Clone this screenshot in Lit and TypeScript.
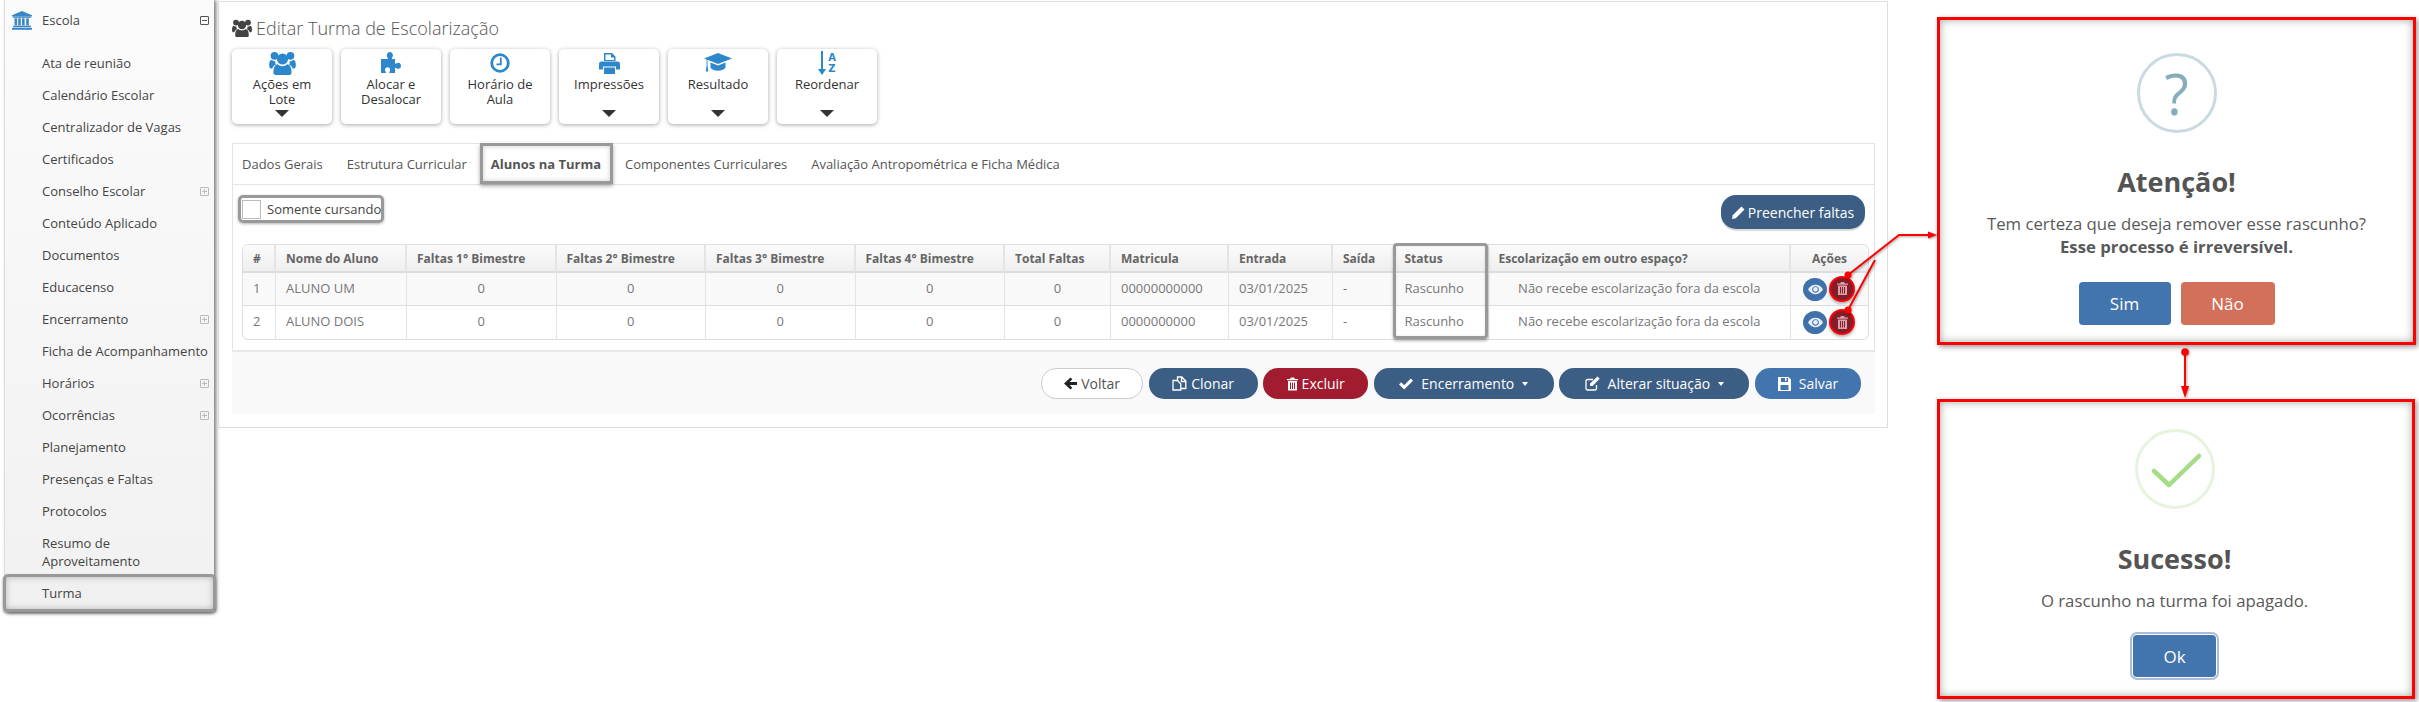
import { LitElement, html, css, svg } from "lit";
import { customElement } from "lit/decorators.js";

const ic = (w: number, h: number, vb: string, body: unknown, cls = "") =>
  html`<svg class="ic ${cls}" width=${w} height=${h} viewBox=${vb} fill="currentColor">${body}</svg>`;

const icons = {
  bank: (w = 20, h = 19) => ic(w, h, "0 0 20 19", svg`<path d="M10 0L20 4.2V5.5H0V4.2Z"/><rect x="1" y="5.5" width="18" height="1.3"/><rect x="2.5" y="7.3" width="2.6" height="7"/><rect x="6.2" y="7.3" width="2.6" height="7"/><rect x="10" y="7.3" width="2.6" height="7"/><rect x="14.2" y="7.3" width="2.6" height="7"/><rect x="1.2" y="14.6" width="17.6" height="1.6"/><rect x="0" y="16.8" width="20" height="2"/>`),
  users: (w: number, h: number) => ic(w, h, "0 0 20 18", svg`<circle cx="10" cy="6" r="4.2"/><circle cx="4" cy="3.6" r="2.9"/><circle cx="16" cy="3.6" r="2.9"/><path d="M4.8 18c-.9 0-1.6-.6-1.6-1.6 0-3.4.8-5.9 3.2-6.4 1 1 2.2 1.4 3.6 1.4s2.6-.4 3.6-1.4c2.4.5 3.2 3 3.2 6.4 0 1-.7 1.6-1.6 1.6z"/><path d="M0 10.5C0 8.300.6 6.800 2 6.800c.8.700 1.700 1 2.700.900-.3 1-.1 1.800.4 2.500-1.500.600-2.400 1.700-2.700 3H1.200C.4 13.200 0 12 0 10.500zM20 10.500c0-2.200-.6-3.700-2-3.700-.8.700-1.700 1-2.700.900.3 1 .1 1.800-.4 2.500 1.500.600 2.400 1.700 2.700 3h1.200c.8 0 1.200-1.200 1.200-2.700z"/>`),
  puzzle: () => ic(22, 24, "0 0 22 24", svg`<path d="M1 8h6.300c.6 0 .8-.5.5-1.100C7 5.700 6.800 5 6.800 4.200 6.800 2.300 8.200 1 9.900 1s3 1.300 3 3.200c0 .8-.3 1.500-.9 2.700-.3.6-.1 1.100.5 1.100H15v4.200c0 .6.500.8 1 .4.900-.7 1.600-.9 2.300-.9 1.700 0 2.700 1.400 2.700 3.100s-1 3-2.700 3c-.7 0-1.400-.3-2.300-.9-.5-.4-1-.2-1 .4V22H9.800c-.5 0-.7-.5-.4-1 .6-.9.800-1.500.800-2.200 0-1.500-1.100-2.500-2.600-2.500s-2.600 1-2.600 2.500c0 .7.200 1.300.8 2.200.3.500.1 1-.4 1H1z"/>`),
  clock: () => ic(20, 20, "0 0 20 20", svg`<circle cx="10" cy="10" r="8.300" fill="none" stroke="currentColor" stroke-width="2.800"/><path d="M10.800 4.500v6.800H6.500" fill="none" stroke="currentColor" stroke-width="1.800"/>`),
  print: () => ic(21, 21, "0 0 21 21", svg`<path d="M5 0h8l3.500 3.500V8H5zM6.500 1.500V7h8.500V4.500h-3v-3z" fill-rule="evenodd"/><path d="M2.500 8.500h16a2.500 2.500 0 0 1 2.500 2.500v5.500h-4v-3H4v3H0V11a2.500 2.500 0 0 1 2.500-2.500z"/><path d="M5 14.500h11V21H5z"/>`),
  cap: () => ic(28, 23, "0 0 28 23", svg`<path d="M14 1L28 6.500 14 12 3.500 7.800v5.700l.8 6H1.800l.8-6V7.400L0 6.500z"/><path d="M6.500 10.500L14 13.500l7.500-3v5.200c-1.500 2-4.500 3-7.500 3s-6-1-7.500-3z"/>`),
  eye: () => ic(15, 11, "0 0 16 11", svg`<path fill-rule="evenodd" d="M0 5.500C2 2 5 .5 8 .5s6 1.500 8 5c-2 3.500-5 5-8 5s-6-1.500-8-5zM8 2C6 2 4.400 3.500 4.400 5.500S6 9 8 9s3.600-1.500 3.600-3.500S10 2 8 2z"/><circle cx="8" cy="5.300" r="2.500"/>`),
  trash: (w = 11, h = 13) => ic(w, h, "0 0 11 13", svg`<path fill-rule="evenodd" d="M4 0h3l1 1.600h3v1.200H0V1.600h3zM1 3.600h9V13H1zM3 5v6.500h1V5zM5 5v6.500h1V5zM7 5v6.500h1V5z"/>`),
  pencil: () => ic(13, 13, "0 0 13 13", svg`<path d="M9.500.6l3 3-8.700 8.700L0 13l.7-3.800z"/>`),
  left: () => ic(13, 13, "0 0 13 13", svg`<path d="M6.500.5l1.800 1.800-2.600 2.700H13v3H5.700l2.600 2.700-1.800 1.800L0 6.500z"/>`),
  copy: () => ic(15, 15, "0 0 15 15", svg`<path fill="none" stroke="currentColor" stroke-width="1.300" d="M5.500 4.200V1h4.300L13.800 5v7.500H9M1 4.500h4.500L8.800 8v6H1zM9.500 1.500V5.500h4"/>`),
  check: () => ic(14, 12, "0 0 14 12", svg`<path d="M0 6.500L2.200 4.300 5.200 7.300 11.800.5 14 2.700 5.200 11.500z"/>`),
  edit: () => ic(15, 15, "0 0 15 15", svg`<path fill="none" stroke="currentColor" stroke-width="1.300" d="M11.500 9v3.500a1.500 1.500 0 0 1-1.500 1.500H2.500A1.500 1.500 0 0 1 1 12.500V5a1.500 1.500 0 0 1 1.500-1.500H8"/><path d="M12.500.5l2.200 2.200L7.600 10H5v-2.600z"/>`),
  save: () => ic(13, 14, "0 0 13 14", svg`<path fill-rule="evenodd" d="M0 0h10.500L13 2.500V14H0zM3 1v4h7V1H8.500v3H7V1zM2.500 8v5h8V8z"/>`),
};

const menu: [string, boolean][] = [
  ["Ata de reunião", false], ["Calendário Escolar", false], ["Centralizador de Vagas", false],
  ["Certificados", false], ["Conselho Escolar", true], ["Conteúdo Aplicado", false],
  ["Documentos", false], ["Educacenso", false], ["Encerramento", true],
  ["Ficha de Acompanhamento", false], ["Horários", true], ["Ocorrências", true],
  ["Planejamento", false], ["Presenças e Faltas", false], ["Protocolos", false],
  ["Resumo de Aproveitamento", false],
];

const tools = [
  { icon: icons.users(27, 24), label: "Ações em Lote", caret: true },
  { icon: icons.puzzle(), label: "Alocar e Desalocar", caret: false },
  { icon: icons.clock(), label: "Horário de Aula", caret: false },
  { icon: icons.print(), label: "Impressões", caret: true },
  { icon: icons.cap(), label: "Resultado", caret: true },
  { icon: html`<span class="az">${ic(8, 24, "0 0 8 24", svg`<path d="M3 0h2v18h3l-4 6-4-6h3z"/>`)}<span class="azt">A<br />Z</span></span>`, label: "Reordenar", caret: true },
];

const cols = [33, 131, 149.5, 149.5, 149.5, 149.5, 106, 118, 104, 61.5, 94, 302.5, 77];
const heads = ["#", "Nome do Aluno", "Faltas 1° Bimestre", "Faltas 2° Bimestre", "Faltas 3° Bimestre", "Faltas 4° Bimestre", "Total Faltas", "Matricula", "Entrada", "Saída", "Status", "Escolarização em outro espaço?", "Ações"];
const rows = [
  ["1", "ALUNO UM", "00000000000"],
  ["2", "ALUNO DOIS", "0000000000"],
];

@customElement("app-root")
export class AppRoot extends LitElement {
  static styles = css`
    :host { display: block; position: relative; width: 2419px; height: 702px; overflow: hidden; background: #fff; font-family: "Open Sans", sans-serif; color: #555; }
    .ic { display: block; flex: none; }
    .page { display: flex; align-items: flex-start; height: 702px; }

    .side { width: 209px; margin-left: 5px; height: 612px; background: linear-gradient(#fbfbfb, #f1f1f1); box-shadow: 2px 0 4px rgba(0,0,0,.55), -1px 0 1px rgba(0,0,0,.08); font-size: 13px; line-height: 18px; color: #444; flex: none; }
    .root { display: flex; align-items: center; height: 40px; }
    .root .bank { width: 37px; padding-left: 7px; box-sizing: border-box; color: #3a87c8; }
    .row { display: flex; align-items: center; justify-content: space-between; padding: 7px 5px 7px 37px; }
    .root .row-t { flex: 1; }
    .tog { width: 9px; height: 9px; margin-right: 5px; box-sizing: border-box; border: 1px solid #bbb; border-radius: 1px; position: relative; flex: none; color: #bbb; }
    .row .tog { margin-right: 0; }
    .tog::before { content: ""; position: absolute; left: 1px; right: 1px; top: 3px; height: 1px; background: currentColor; }
    .tog.plus::after { content: ""; position: absolute; top: 1px; bottom: 1px; left: 3px; width: 1px; background: currentColor; }
    .tog.minus { border-color: #555; color: #555; }
    .list { margin-top: 7px; }
    .turma { margin: -3px -2px 0 -2px; padding-left: 36px; border: 3px solid #999; border-radius: 5px; height: 38px; box-sizing: border-box; background: #f0f0f0; box-shadow: inset 0 0 6px rgba(0,0,0,.25), 0 2px 3px rgba(0,0,0,.4); }

    .main { width: 1670px; height: 427px; margin: 1px 0 0 4px; box-sizing: border-box; border: 1px solid #ddd; padding: 14px 12px 0 13px; flex: none; }
    h1 { margin: 0; font-size: 18px; font-weight: 300; line-height: 24px; color: #555; display: flex; align-items: center; gap: 4px; }
    h1 .ic { color: #444; }
    .tools { display: flex; gap: 9px; margin-top: 9px; }
    .tool { width: 100px; height: 75px; box-sizing: border-box; padding-top: 2px; background: #fff; border-radius: 5px; box-shadow: 0 1px 4px rgba(0,0,0,.35); display: flex; flex-direction: column; align-items: center; font-size: 13px; line-height: 15px; color: #333; text-align: center; }
    .tool .i { height: 24px; display: flex; align-items: center; color: #2d88cb; margin-bottom: 2px; }
    .tool .l { width: 82px; }
    .caret { margin-top: auto; margin-bottom: 7px; width: 0; height: 0; border-left: 7px solid transparent; border-right: 7px solid transparent; border-top: 7px solid #333; }
    .az { display: flex; gap: 2px; align-items: center; }
    .azt { font: bold 10px/11px "DejaVu Sans", sans-serif; color: #2d88cb; }

    .tabs { margin-top: 19px; border: 1px solid #e4e4e4; border-bottom: 2px solid #e8e8e8; height: 209px; box-sizing: border-box; width: 1643px; position: relative; }
    .tabbar { display: flex; height: 40px; border-bottom: 1px solid #e4e4e4; font-size: 13px; color: #555; align-items: center; padding-left: 9px; gap: 24px; }
    .tab.on { font-weight: 700; position: relative; }
    .tab.on::after { content: ""; position: absolute; left: -11px; right: -12px; top: -12px; bottom: -11px; border: 3px solid #999; box-shadow: 0 2px 4px rgba(0,0,0,.35), inset 0 0 5px rgba(0,0,0,.2); }
    .bar { display: flex; justify-content: space-between; align-items: flex-start; padding: 10px 9px 0 5px; height: 59px; box-sizing: border-box; }
    .chk { display: flex; align-items: center; gap: 6px; height: 28px; width: 146px; box-sizing: border-box; border: 3px solid #999; border-radius: 5px; font-size: 13px; color: #444; padding-left: 1px; box-shadow: 0 1px 3px rgba(0,0,0,.3); white-space: nowrap; }
    .box { width: 19px; height: 19px; box-sizing: border-box; border: 1px solid #bbb; background: #fff; flex: none; }
    .fill { height: 34px; width: 144px; border-radius: 15px; background: #3c5d84; color: #fff; font-size: 14px; display: flex; align-items: center; justify-content: center; gap: 3px; box-shadow: 0 2px 1px rgba(0,0,0,.15); }

    .tw { margin: 0 8px 0 9px; position: relative; width: 1625px; }
    table { border-collapse: separate; border-spacing: 0; table-layout: fixed; width: 1625px; border: 1px solid #ddd; border-radius: 6px; box-sizing: border-box; font-size: 13px; color: #777; }
    th { height: 28px; padding: 0 0 0 10px; box-sizing: border-box; text-align: left; font-size: 12px; font-weight: 700; color: #666; background: linear-gradient(#fbfbfb, #eee); border-bottom: 2px solid #ddd; border-right: 2px solid #e4e4e4; white-space: nowrap; }
    th:first-child { border-top-left-radius: 6px; }
    th:last-child { border-top-right-radius: 6px; border-right: 0; text-align: center; padding: 0; }
    td { height: 33px; padding: 0 0 3px 10px; box-sizing: border-box; border-bottom: 1px solid #ddd; border-right: 1px solid #e4e4e4; white-space: nowrap; }
    td:last-child { border-right: 0; }
    tr:last-child td { border-bottom: 0; }
    tr.odd td { background: #f9f9f9; }
    td.c { text-align: center; padding: 0 0 3px; }
    .acts { display: flex; gap: 3px; justify-content: flex-end; padding: 3px 14px 0 0; }
    .eye { width: 24px; height: 23px; border-radius: 50%; background: #3f71ab; color: #e8eef5; display: flex; align-items: center; justify-content: center; }
    .del { width: 22px; height: 22px; border-radius: 50%; background: #851c2c; color: #d9a0a8; display: flex; align-items: center; justify-content: center; box-shadow: 0 0 0 2px #f00, 0 2px 3px 2px rgba(0,0,0,.3); margin: 0 1px; }
    .stat { position: absolute; left: 1151px; top: -1px; width: 95px; height: 96px; box-sizing: border-box; border: 3px solid #999; border-radius: 4px; box-shadow: 0 2px 3px rgba(0,0,0,.3), inset 0 0 3px rgba(0,0,0,.1); }

    .foot { width: 1643px; height: 62px; background: #f9f9f9; display: flex; justify-content: flex-end; padding: 16px 14px 0 0; box-sizing: border-box; gap: 5.6px; }
    .b { height: 31px; border-radius: 15px; color: #fff; font-size: 14px; display: flex; align-items: center; justify-content: center; gap: 4px; box-sizing: border-box; white-space: nowrap; }
    .b .cr { width: 0; height: 0; border-left: 3.5px solid transparent; border-right: 3.5px solid transparent; border-top: 4px solid #fff; }
    .volta { width: 102px; background: #fff; color: #555; border: 1px solid #ccc; }
    .volta .ic { color: #222; }
    .clo { width: 109px; background: #3c5d84; }
    .exc { width: 105px; background: #a01c2e; }
    .enc { width: 180px; background: #3c5d84; gap: 8px; }
    .alt { width: 190px; background: #3c5d84; gap: 8px; }
    .sal { width: 106px; background: #4274ae; gap: 8px; }

    .mods { margin-left: 49px; width: 479px; flex: none; display: flex; flex-direction: column; gap: 54px; padding-top: 17px; }
    .mod { box-sizing: border-box; width: 479px; border: 3px solid #f00; display: flex; flex-direction: column; align-items: center; box-shadow: inset 0 0 9px rgba(0,0,0,.35), 2px 2px 5px rgba(0,0,0,.4); color: #555; text-align: center; }
    .m1 { height: 328px; padding-top: 33px; }
    .m2 { width: 478px; height: 300px; padding: 27px 3px 0 0; }
    .circ { width: 80px; height: 80px; box-sizing: border-box; border-radius: 50%; border: 3px solid #c9dae1; color: #87adbd; font-size: 56px; line-height: 74px; display: flex; align-items: center; justify-content: center; }
    h2 { margin: 29px 0 0; font-size: 27px; line-height: 40px; font-weight: 700; color: #545454; }
    .m2 h2 { margin-top: 30px; }
    p { margin: 10px 0 0; font-size: 16.75px; line-height: 23px; color: #595959; }
    p b { font-weight: 700; }
    .btns { display: flex; gap: 10px; margin-top: 24px; }
    .mb { height: 43px; border-radius: 4px; color: #fff; font-size: 17px; display: flex; align-items: center; justify-content: center; }
    .sim { width: 92px; background: #4274ae; }
    .nao { width: 94px; background: #d3705a; }
    .ok { width: 83px; height: 42px; background: #4274ae; margin-top: 23px; box-shadow: 0 0 0 1px #fff, 0 0 0 3px #a9bfd9; }

    .ann { position: absolute; left: 0; top: 0; pointer-events: none; filter: drop-shadow(1px 1px 1px rgba(0,0,0,.35)); }
  `;

  render() {
    return html`
      <div class="page">
        <aside class="side">
          <div class="root">
            <span class="bank">${icons.bank()}</span>
            <span class="row-t">Escola</span>
            <span class="tog minus"></span>
          </div>
          <div class="list">
            ${menu.map(([t, sub]) => html`<div class="row"><span>${t}</span>${sub ? html`<span class="tog plus"></span>` : ""}</div>`)}
            <div class="row turma"><span>Turma</span></div>
          </div>
        </aside>

        <main class="main">
          <h1>${icons.users(20, 18)}<span>Editar Turma de Escolarização</span></h1>
          <div class="tools">
            ${tools.map((t) => html`<div class="tool"><span class="i">${t.icon}</span><span class="l">${t.label}</span>${t.caret ? html`<span class="caret"></span>` : ""}</div>`)}
          </div>
          <section class="tabs">
            <div class="tabbar">
              <span class="tab">Dados Gerais</span>
              <span class="tab">Estrutura Curricular</span>
              <span class="tab on">Alunos na Turma</span>
              <span class="tab">Componentes Curriculares</span>
              <span class="tab">Avaliação Antropométrica e Ficha Médica</span>
            </div>
            <div class="bar">
              <label class="chk"><span class="box"></span>Somente cursando</label>
              <div class="fill">${icons.pencil()}Preencher faltas</div>
            </div>
            <div class="tw">
              <table>
                <colgroup>${cols.map((w) => html`<col style="width:${w}px" />`)}</colgroup>
                <thead><tr>${heads.map((h) => html`<th>${h}</th>`)}</tr></thead>
                <tbody>
                  ${rows.map((r, i) => html`<tr class=${i === 0 ? "odd" : ""}>
                    <td>${r[0]}</td><td>${r[1]}</td>
                    <td class="c">0</td><td class="c">0</td><td class="c">0</td><td class="c">0</td><td class="c">0</td>
                    <td>${r[2]}</td><td>03/01/2025</td><td>-</td><td>Rascunho</td>
                    <td class="c">Não recebe escolarização fora da escola</td>
                    <td class="c"><div class="acts"><span class="eye">${icons.eye()}</span><span class="del">${icons.trash()}</span></div></td>
                  </tr>`)}
                </tbody>
              </table>
              <div class="stat"></div>
            </div>
          </section>
          <div class="foot">
            <span class="b volta">${icons.left()}Voltar</span>
            <span class="b clo">${icons.copy()}Clonar</span>
            <span class="b exc">${icons.trash(11, 14)}Excluir</span>
            <span class="b enc">${icons.check()}Encerramento<i class="cr"></i></span>
            <span class="b alt">${icons.edit()}Alterar situação<i class="cr"></i></span>
            <span class="b sal">${icons.save()}Salvar</span>
          </div>
        </main>

        <div class="mods">
          <section class="mod m1">
            <div class="circ">?</div>
            <h2>Atenção!</h2>
            <p>Tem certeza que deseja remover esse rascunho?<br /><b>Esse processo é irreversível.</b></p>
            <div class="btns"><span class="mb sim">Sim</span><span class="mb nao">Não</span></div>
          </section>
          <section class="mod m2">
            <svg class="ic" width="80" height="80" viewBox="0 0 80 80">
              <circle cx="40" cy="40" r="38.500" fill="none" stroke="#e6f3dd" stroke-width="3" />
              <path d="M19 42L34 56 64 27" fill="none" stroke="#a5dc86" stroke-width="4.500" stroke-linecap="round" stroke-linejoin="round" />
            </svg>
            <h2>Sucesso!</h2>
            <p>O rascunho na turma foi apagado.</p>
            <span class="mb ok">Ok</span>
          </section>
        </div>
      </div>

      <svg class="ann" width="2419" height="702" viewBox="0 0 2419 702" fill="none" stroke="#f00" stroke-width="2">
        <path d="M1848 275L1899 235H1930M1848 310L1875 260" />
        <path d="M1937 235l-9-3.500v7z" fill="#f00" stroke="none" />
        <circle cx="1848" cy="275" r="3.500" fill="#f00" stroke="none" />
        <circle cx="1848" cy="310" r="3.500" fill="#f00" stroke="none" />
        <path d="M2185 352V390" />
        <circle cx="2185" cy="352" r="3.800" fill="#f00" stroke="none" />
        <path d="M2185 398l-4-12h8z" fill="#f00" stroke="none" />
      </svg>
    `;
  }
}
